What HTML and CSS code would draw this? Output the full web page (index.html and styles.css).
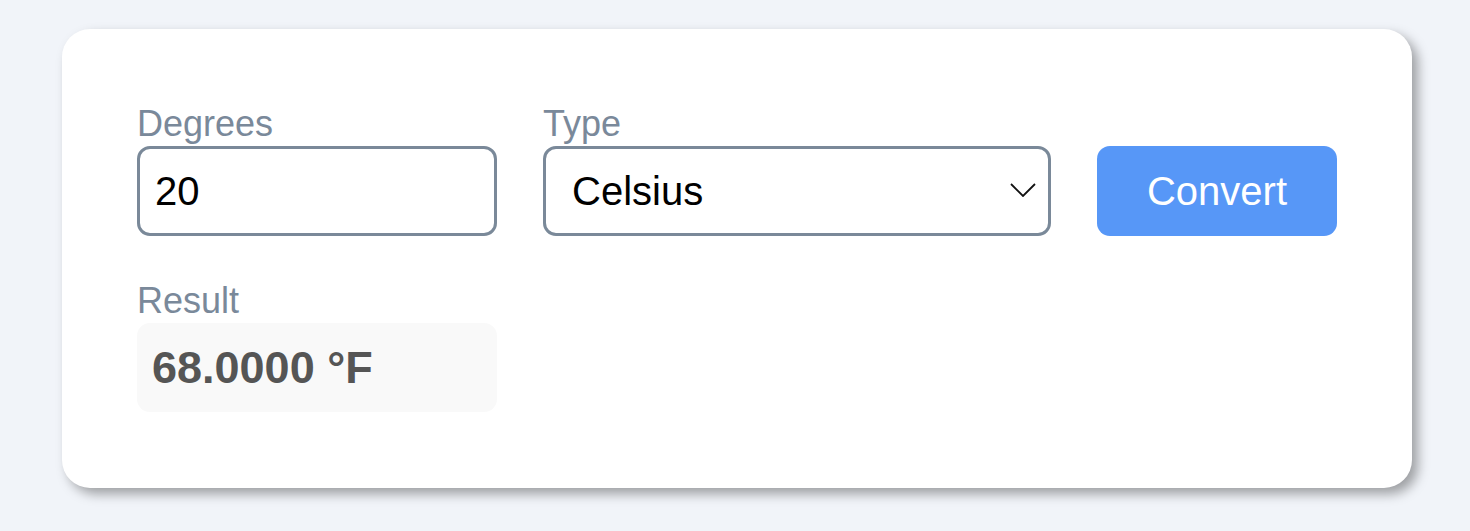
FILE: index.html
```html
<!DOCTYPE html>
<html lang="en">
<head>
<meta charset="utf-8">
<title>Temperature Converter</title>
<link rel="stylesheet" href="styles.css">
</head>
<body>
<main class="card">
  <div class="row">
    <div class="field field-degrees">
      <label class="label" for="deg">Degrees</label>
      <input class="input" id="deg" type="text" value="20">
    </div>
    <div class="field field-type">
      <label class="label" for="type">Type</label>
      <div class="select-wrap">
        <select class="select" id="type">
          <option>Celsius</option>
          <option>Fahrenheit</option>
        </select>
        <svg class="chevron" width="26" height="14" viewBox="0 0 26 14" aria-hidden="true">
          <path d="M1 1 L13 13 L25 1" fill="none" stroke="#111" stroke-width="1.8"/>
        </svg>
      </div>
    </div>
    <div class="field field-btn">
      <button class="button" type="button">Convert</button>
    </div>
  </div>
  <div class="row row-result">
    <div class="field field-degrees">
      <span class="label">Result</span>
      <div class="result">68.0000 °F</div>
    </div>
  </div>
</main>
</body>
</html>
```

FILE: styles.css
```css
* { box-sizing: border-box; }
html, body {
  margin: 0;
  padding: 0;
}
body {
  background: #f1f4f9;
  font-family: "Liberation Sans", Arial, sans-serif;
  padding: 29px 58px 43px 62px;
}
.card {
  width: 1350px;
  background: #ffffff;
  border-radius: 28px;
  box-shadow: 6px 6px 12px rgba(0, 0, 0, 0.35);
  padding: 75px 75px 76px;
  display: flex;
  flex-direction: column;
  gap: 45px;
}
.row {
  display: flex;
  gap: 46px;
  align-items: flex-end;
}
.field {
  display: flex;
  flex-direction: column;
  gap: 2px;
}
.field-degrees { width: 360px; }
.field-type { width: 508px; }
.field-btn { width: 240px; }
.label {
  display: block;
  font-size: 36px;
  line-height: 40px;
  color: #7a899a;
}
.input,
.select {
  font-family: "Liberation Sans", Arial, sans-serif;
  font-size: 40px;
  color: #000;
  height: 90px;
  border: 3px solid #7a8999;
  border-radius: 13px;
  background: #fff;
  outline: none;
  margin: 0;
}
.input {
  width: 360px;
  padding: 0 15px;
}
.select-wrap {
  position: relative;
  width: 508px;
}
.select {
  -webkit-appearance: none;
  appearance: none;
  width: 508px;
  padding: 0 60px 0 26px;
}
.chevron {
  position: absolute;
  right: 15px;
  top: 37px;
  pointer-events: none;
}
.button {
  width: 240px;
  height: 90px;
  border: none;
  border-radius: 13px;
  background: #5797f7;
  color: #fff;
  font-family: "Liberation Sans", Arial, sans-serif;
  font-size: 40px;
  margin: 0;
  padding: 0;
}
.result {
  width: 360px;
  height: 89px;
  background: #f9f9f9;
  border-radius: 13px;
  padding: 0 15px;
  display: flex;
  align-items: center;
  font-size: 45px;
  font-weight: bold;
  color: #555555;
}
```
